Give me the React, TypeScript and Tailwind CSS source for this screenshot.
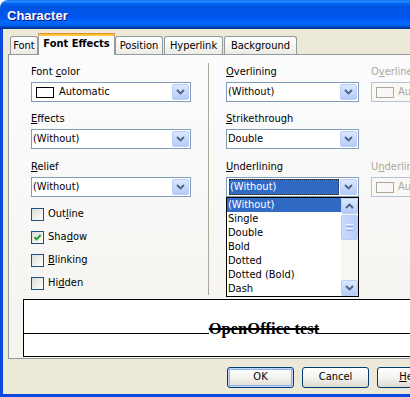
import type { ReactNode } from "react";

// XP-style "Character" dialog, Font Effects tab, underline list dropped down.
const UI_FONT =
  "font-[family-name:'DejaVu_Sans_Condensed','Liberation_Sans',sans-serif]";

const UNDERLINES = [
  "(Without)",
  "Single",
  "Double",
  "Bold",
  "Dotted",
  "Dotted (Bold)",
  "Dash",
];

function Chevron({ up = false }: { up?: boolean }) {
  return (
    <svg width="9" height="6" viewBox="0 0 9 6" aria-hidden>
      <path
        d={up ? "M1 5L4.5 1.5L8 5" : "M1 1L4.5 4.5L8 1"}
        fill="none"
        stroke="#4d6185"
        strokeWidth="1.9"
      />
    </svg>
  );
}

function ArrowButton({ up = false, className = "" }: { up?: boolean; className?: string }) {
  return (
    <div
      className={`flex w-[17px] shrink-0 items-center justify-center rounded-[2px] border border-[#b9cdf6] bg-linear-to-b from-[#dde8fe] to-[#b4caf8] ${className}`}
    >
      <Chevron up={up} />
    </div>
  );
}

function Combo({ children, disabled = false }: { children: ReactNode; disabled?: boolean }) {
  return (
    <div
      className={`flex h-[20px] items-center border p-px ${
        disabled ? "border-[#b3c2d6] bg-[#f9f8f4] text-[#aca899]" : "border-[#7f9db9] bg-white"
      }`}
    >
      <div className="flex h-full min-w-0 flex-1 items-center overflow-hidden whitespace-nowrap">
        {children}
      </div>
      {!disabled && <ArrowButton className="h-full" />}
    </div>
  );
}

function Swatch({ disabled = false }: { disabled?: boolean }) {
  return (
    <span
      className={`ml-[3px] h-[11px] w-[18px] shrink-0 border ${
        disabled ? "border-[#aca899]" : "border-black bg-white"
      }`}
    />
  );
}

function Field({
  label,
  children,
  className = "",
}: {
  label: ReactNode;
  children: ReactNode;
  className?: string;
}) {
  return (
    <div className={className}>
      <div className="h-[13px] whitespace-nowrap leading-[13px]">{label}</div>
      <div className="relative mt-[4px]">{children}</div>
    </div>
  );
}

function Check({ label, checked = false }: { label: ReactNode; checked?: boolean }) {
  return (
    <div className="flex h-[23px] items-center gap-[4px]">
      <div className="flex h-[13px] w-[13px] items-center justify-center border border-[#1c5180] bg-linear-to-br from-[#dcdcd7] to-white">
        {checked && (
          <svg width="9" height="9" viewBox="0 0 9 9" aria-hidden>
            <path d="M1.5 4.2L3.6 6.4L7.6 2" fill="none" stroke="#21a121" strokeWidth="2" />
          </svg>
        )}
      </div>
      <span>{label}</span>
    </div>
  );
}

function UnderlineList() {
  return (
    <div className="absolute left-0 top-full z-20 flex h-[100px] w-full border border-black bg-white">
      <div className="min-w-0 flex-1">
        {UNDERLINES.map((u, i) => (
          <div
            key={u}
            className={`h-[14px] whitespace-nowrap pl-px leading-[14px] ${
              i === 0 ? "bg-[#316ac5] text-white" : ""
            }`}
          >
            {u}
          </div>
        ))}
      </div>
      <div className="flex w-[17px] flex-col bg-[#f7f6f2]">
        <ArrowButton up className="h-[16px]" />
        <div className="flex-1 pt-px">
          <div className="flex h-[25px] flex-col items-center justify-center gap-px rounded-[2px] border border-[#b9cdf6] bg-linear-to-r from-[#c9daff] to-[#b7cdf8]">
            <div className="h-px w-[7px] bg-[#eef4ff]" />
            <div className="h-px w-[7px] bg-[#8caef0]" />
            <div className="h-px w-[7px] bg-[#eef4ff]" />
            <div className="h-px w-[7px] bg-[#8caef0]" />
          </div>
        </div>
        <ArrowButton className="h-[16px]" />
      </div>
    </div>
  );
}

function Tab({ children, className = "" }: { children: ReactNode; className?: string }) {
  return (
    <div
      className={`flex h-[18px] shrink-0 items-center justify-center rounded-t-[3px] border border-b-0 border-[#919b9c] bg-linear-to-b from-white to-[#ecebe5] pt-px ${className}`}
    >
      {children}
    </div>
  );
}

function Button({ children, primary = false }: { children: ReactNode; primary?: boolean }) {
  return (
    <div
      className={`flex h-[21px] w-[67px] items-center justify-center rounded-[3px] border border-[#003c74] bg-linear-to-b from-white via-[#f3f3ef] to-[#dedbd0] ${
        primary ? "shadow-[inset_0_0_0_1px_#c2d7f8,inset_0_0_0_2px_#8fb0ee]" : ""
      }`}
    >
      {children}
    </div>
  );
}

export default function App() {
  return (
    <div className={`h-[397px] w-[410px] overflow-hidden bg-white text-[11px] text-black ${UI_FONT}`}>
      <div className="flex h-[397px] w-[528px] flex-col">
        {/* title bar */}
        <div className="flex h-[29px] shrink-0 items-center rounded-t-[8px] bg-[linear-gradient(to_bottom,#0058ee_0%,#3593ff_4%,#288eff_6%,#127dff_8%,#036ffc_10%,#0262ee_14%,#0057e5_20%,#0054e3_24%,#0055eb_56%,#005bf5_66%,#026afe_76%,#0062ef_86%,#0052d6_92%,#0040ab_94%,#003092_100%)] pl-[7px] pt-[2px]">
          <span className="font-[family-name:'Liberation_Sans',sans-serif] text-[13px] font-bold text-white [text-shadow:1px_1px_0_#0f1089]">
            Character
          </span>
        </div>

        <div className="flex flex-1 flex-col border-x-[3px] border-b-[3px] border-[#0b48dd] bg-[#ece9d8] px-[5px] pt-[4px]">
          {/* tabs */}
          <div className="flex h-[21px] items-end pl-[2px]">
            <Tab className="w-[28px]">Font</Tab>
            <div className="relative z-10 -mb-px flex h-[22px] w-[77px] shrink-0 flex-col border-x border-[#919b9c] bg-[#fcfcfe] font-bold">
              <div className="-mx-px h-[3px] rounded-t-[3px] border-t border-[#e68b2c] bg-[#ffc83c]" />
              <div className="flex flex-1 items-center justify-center pb-[2px]">Font Effects</div>
            </div>
            <Tab className="w-[48px]">Position</Tab>
            <Tab className="ml-px w-[59px]">Hyperlink</Tab>
            <Tab className="ml-px w-[73px]">Background</Tab>
          </div>

          {/* tab page */}
          <div className="flex h-[305px] shrink-0 flex-col border border-[#919b9c] bg-linear-to-b from-[#fcfcfe] to-[#f4f3ee]">
            <div className="flex pl-[22px] pt-[10px]">
              <div className="w-[160px] shrink-0">
                <Field
                  label={
                    <>
                      Font <u>c</u>olor
                    </>
                  }
                >
                  <Combo>
                    <Swatch />
                    <span className="ml-[5px]">Automatic</span>
                  </Combo>
                </Field>
                <Field
                  className="mt-[10px]"
                  label={
                    <>
                      <u>E</u>ffects
                    </>
                  }
                >
                  <Combo>(Without)</Combo>
                </Field>
                <Field
                  className="mt-[11px]"
                  label={
                    <>
                      <u>R</u>elief
                    </>
                  }
                >
                  <Combo>(Without)</Combo>
                </Field>
                <div className="mt-[6px]">
                  <Check
                    label={
                      <>
                        Out<u>l</u>ine
                      </>
                    }
                  />
                  <Check
                    checked
                    label={
                      <>
                        Sha<u>d</u>ow
                      </>
                    }
                  />
                  <Check
                    label={
                      <>
                        <u>B</u>linking
                      </>
                    }
                  />
                  <Check
                    label={
                      <>
                        Hi<u>d</u>den
                      </>
                    }
                  />
                </div>
              </div>

              <div className="mx-[17px] -mt-[2px] w-px shrink-0 bg-[#aca899]" />

              <div className="w-[133px] shrink-0">
                <Field
                  label={
                    <>
                      <u>O</u>verlining
                    </>
                  }
                >
                  <Combo>(Without)</Combo>
                </Field>
                <Field
                  className="mt-[10px]"
                  label={
                    <>
                      <u>S</u>trikethrough
                    </>
                  }
                >
                  <Combo>Double</Combo>
                </Field>
                <Field
                  className="mt-[11px]"
                  label={
                    <>
                      <u>U</u>nderlining
                    </>
                  }
                >
                  <Combo>
                    <span className="mx-px flex h-[16px] flex-1 items-center border border-dotted border-[#202020] bg-[#316ac5] text-white">
                      (Without)
                    </span>
                  </Combo>
                  <UnderlineList />
                </Field>
              </div>

              <div className="ml-[12px] w-[133px] shrink-0 text-[#aca899]">
                <Field
                  label={
                    <>
                      O<u>v</u>erline color
                    </>
                  }
                >
                  <Combo disabled>
                    <Swatch disabled />
                    <span className="ml-[4px]">Automatic</span>
                  </Combo>
                </Field>
                <div className="mt-[10px] h-[37px]" />
                <Field
                  className="mt-[11px]"
                  label={
                    <>
                      U<u>n</u>derline color
                    </>
                  }
                >
                  <Combo disabled>
                    <Swatch disabled />
                    <span className="ml-[4px]">Automatic</span>
                  </Combo>
                </Field>
              </div>
            </div>

            {/* preview */}
            <div className="mx-[14px] mt-[4px] h-[58px] border border-black bg-white">
              <div className="flex items-baseline pt-[21px]">
                <div className="h-px flex-1 bg-black" />
                <span className="font-[family-name:'Liberation_Serif',serif] text-[16.5px] font-bold leading-[16px] line-through decoration-2">
                  OpenOffice test
                </span>
                <div className="h-px flex-1 bg-black" />
              </div>
            </div>
          </div>

          {/* buttons */}
          <div className="mt-[8px] flex gap-[8px] pl-[219px]">
            <Button primary>OK</Button>
            <Button>Cancel</Button>
            <Button>
              <span>
                <u>H</u>elp
              </span>
            </Button>
            <Button>Reset</Button>
          </div>
        </div>
      </div>
    </div>
  );
}
